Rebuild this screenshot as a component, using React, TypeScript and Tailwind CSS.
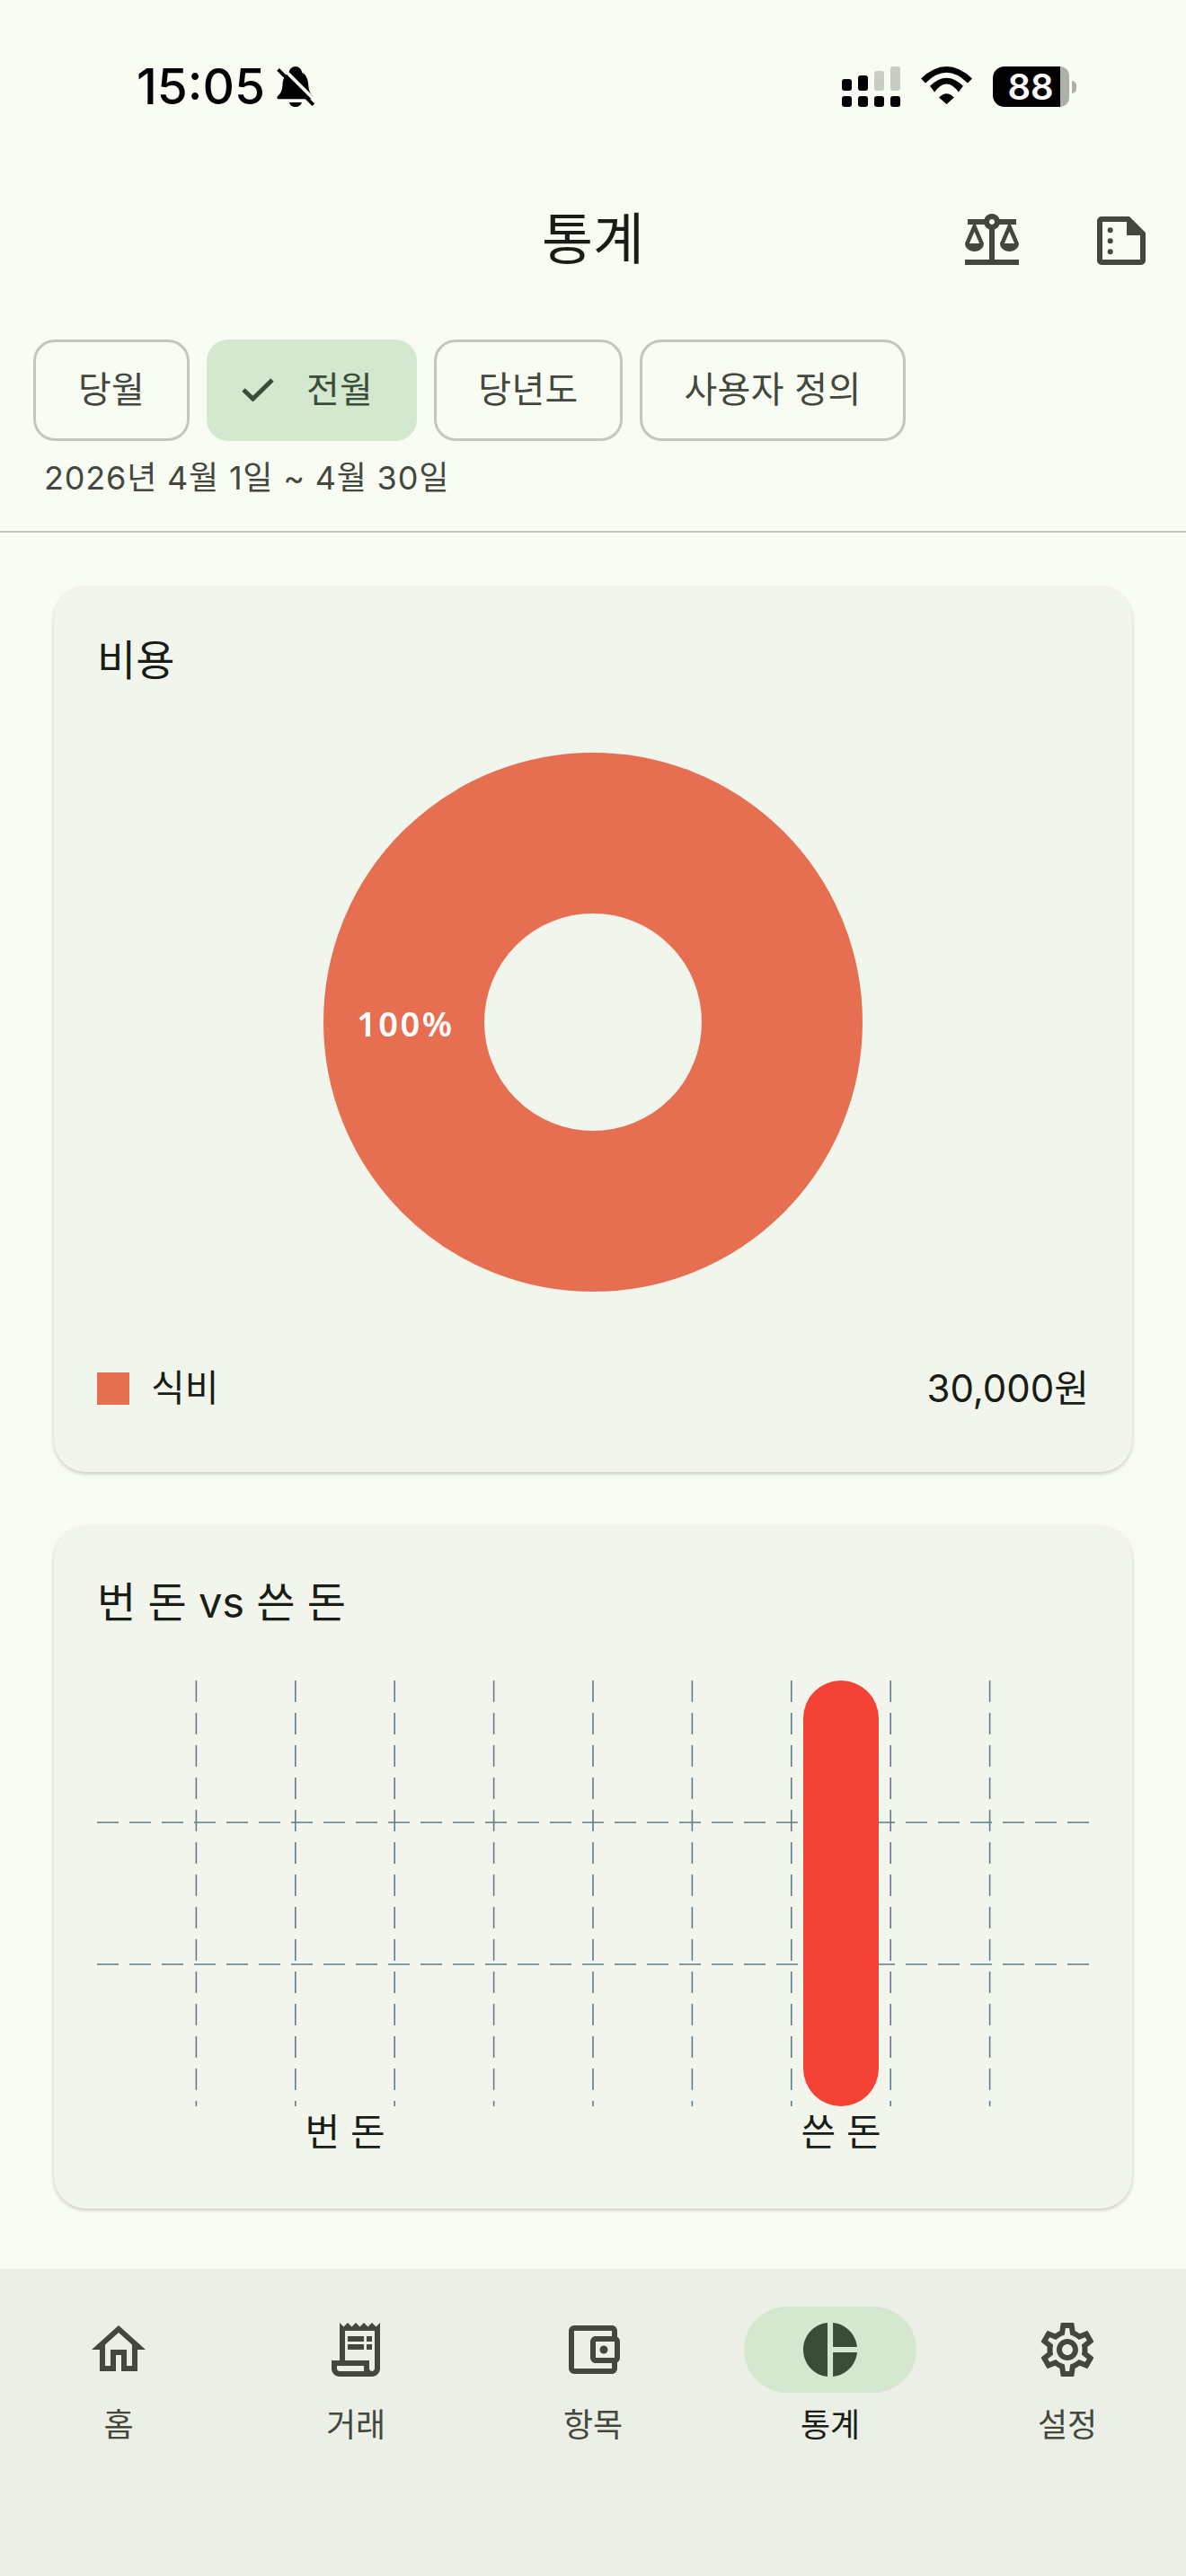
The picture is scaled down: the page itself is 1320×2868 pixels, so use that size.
import React from "react";
import {
  MdOutlineBalance,
  MdOutlineHome,
  MdOutlineReceiptLong,
  MdOutlineAccountBalanceWallet,
  MdPieChart,
  MdOutlineSettings,
} from "react-icons/md";

function Bell() {
  return (
    <svg width="42" height="45" viewBox="618 105 125 135" className="block">
      <path
        fill="#000"
        d="M680 105c-12 0-20 9-22 20-14 8-20 22-21 40-1 20-6 30-17 40-3 4-1 9 4 9h112c5 0 7-5 4-9-11-10-16-20-17-40-1-18-7-32-21-40-2-11-10-20-22-20z"
      />
      <path fill="#000" d="M659 225h42c-2 9-11 15-21 15s-19-6-21-15z" />
      <path d="M631 104L752 225" stroke="#f9fcf3" strokeWidth="11" />
      <path d="M622 115L740 233" stroke="#000" strokeWidth="11" />
    </svg>
  );
}

function Signal() {
  const bottom = [0, 18, 36, 54];
  const top = [
    { x: 0, y: 14, h: 13, c: "#000" },
    { x: 18, y: 10, h: 17, c: "#000" },
    { x: 36, y: 5, h: 22, c: "#c8ccc4" },
    { x: 54, y: 0, h: 27, c: "#c8ccc4" },
  ];
  return (
    <svg width="65" height="45" viewBox="0 0 65 45" className="block">
      {top.map((b) => (
        <rect key={b.x} x={b.x} y={b.y} width="11" height={b.h} rx="3" fill={b.c} />
      ))}
      {bottom.map((x) => (
        <rect key={x} x={x} y="33" width="11" height="12" rx="3" fill="#000" />
      ))}
    </svg>
  );
}

function Wifi() {
  return (
    <svg width="57" height="42" viewBox="435 105 170 125" className="block">
      <path fill="#000" d="M435 145Q520 65 605 145L590 160Q520 90 450 160Z" />
      <path fill="#000" d="M465 170Q520 116 575 170L560 190Q520 136 480 190Z" />
      <path fill="#000" d="M495 208Q520 182 545 208L520 230Z" />
    </svg>
  );
}

function Battery() {
  return (
    <div className="flex items-center">
      <div className="flex h-[45px] w-[75px] items-center justify-center rounded-l-[13px] bg-black pl-[9px] text-[40px] leading-[45px] font-semibold text-white">
        88
      </div>
      <div className="h-[45px] w-[10px] rounded-r-[10px] bg-[#adb0a9]" />
      <div className="ml-[3px] h-[14px] w-[5px] rounded-r-full bg-[#adb0a9]" />
    </div>
  );
}

function FileNotes() {
  return (
    <svg width="54" height="54" viewBox="0 0 54 54" className="block">
      <path
        fill="#43483f"
        fillRule="evenodd"
        d="M5 0H36L54 18V49a5 5 0 0 1-5 5H5a5 5 0 0 1-5-5V5a5 5 0 0 1 5-5zM6 6V48H48V21H33V6z"
      />
      <circle cx="14.7" cy="15.3" r="3" fill="#43483f" />
      <circle cx="14.7" cy="27.3" r="3" fill="#43483f" />
      <circle cx="14.7" cy="39.3" r="3" fill="#43483f" />
    </svg>
  );
}

function Check() {
  return (
    <svg width="36" height="26" viewBox="0 0 36 26" className="block">
      <path d="M2 13L12.5 23L34 2" fill="none" stroke="#3b4d38" strokeWidth="5" />
    </svg>
  );
}

function Chip({ label, w }: { label: string; w: string }) {
  return (
    <div
      className={`flex h-[113px] ${w} items-center justify-center rounded-[24px] border-[3px] border-[#c3c8bc] pb-[2px] text-[40px] tracking-[0.3px] text-[#43483f]`}
    >
      {label}
    </div>
  );
}

function Card({
  title,
  className,
  titleClass,
  children,
}: {
  title: string;
  className: string;
  titleClass: string;
  children: React.ReactNode;
}) {
  return (
    <section
      className={`${className} rounded-[36px] bg-[#f2f5ec] px-[48px] shadow-[0_2px_4px_rgba(0,0,0,0.2)]`}
    >
      <h2 className={`${titleClass} text-[47px] leading-[64px] text-[#191d17]`}>{title}</h2>
      {children}
    </section>
  );
}

function BarChart() {
  const xs = [1, 2, 3, 4, 5, 6, 7, 8, 9].map((k) => 110.4 * k);
  return (
    <svg width="1104" height="474" viewBox="0 0 1104 474" className="block">
      {xs.map((x) => (
        <line key={x} x1={x} x2={x} y1="0" y2="474" stroke="#607d8b" strokeWidth="1.6" strokeDasharray="24 12" />
      ))}
      {[158, 316].map((y) => (
        <line key={y} x1="0" x2="1104" y1={y} y2={y} stroke="#607d8b" strokeWidth="1.4" strokeDasharray="24 12" />
      ))}
      <rect x="786" y="0" width="84" height="474" rx="42" fill="#f44336" />
    </svg>
  );
}

function NavItem({ icon, label, active }: { icon: React.ReactNode; label: string; active?: boolean }) {
  return (
    <div className="flex w-[264px] flex-col items-center pt-[42px]">
      <div
        className={`flex h-[96px] w-[192px] items-center justify-center rounded-full ${active ? "bg-[#d4e8d0] text-[#3b4d38]" : "text-[#43483f]"}`}
      >
        {icon}
      </div>
      <div className={`mt-[12px] text-[36px] leading-[48px] ${active ? "text-[#191d17]" : "text-[#43483f]"}`}>{label}</div>
    </div>
  );
}

export default function App() {
  return (
    <div className="flex h-[2868px] w-[1320px] flex-col overflow-hidden bg-[#f9fcf3] font-['Inter','Noto_Sans_CJK_KR',sans-serif]">
      <div className="flex h-[168px] items-start justify-between pt-[74px] pr-[122px] pl-[152px]">
        <div className="flex items-center gap-[13px]">
          <span className="text-[55px] leading-[45px] font-medium text-black">15:05</span>
          <Bell />
        </div>
        <div className="flex items-start gap-[23px]">
          <Signal />
          <Wifi />
          <Battery />
        </div>
      </div>

      <header className="grid h-[200px] grid-cols-3 items-center">
        <div />
        <h1 className="pb-[3px] text-center text-[62px] leading-none text-[#191d17]">통계</h1>
        <div className="flex justify-end">
          <div className="flex h-[144px] w-[144px] items-center justify-center text-[#43483f]">
            <MdOutlineBalance size={72} />
          </div>
          <div className="flex h-[144px] w-[144px] items-center justify-center">
            <FileNotes />
          </div>
        </div>
      </header>

      <div className="mt-[10px] flex gap-[19px] pl-[37px]">
        <Chip label="당월" w="w-[174px]" />
        <div className="flex h-[113px] w-[234px] items-center rounded-[24px] bg-[#d4e8d0] pb-[2px] pl-[39px] text-[40px] tracking-[0.3px] text-[#3b4d38]">
          <Check />
          <span className="ml-[36px]">전월</span>
        </div>
        <Chip label="당년도" w="w-[210px]" />
        <Chip label="사용자 정의" w="w-[296px]" />
      </div>
      <div className="h-[100px] pt-[16px] pl-[49px] text-[36px] leading-[50px] tracking-[0.8px] text-[#43483f]">
        2026년 4월 1일 ~ 4월 30일
      </div>
      <div className="h-[2px] bg-[#c3c8bc]" />

      <main className="flex flex-1 flex-col gap-[60px] px-[60px] pt-[60px]">
        <Card title="비용" titleClass="pt-[50px]" className="h-[986px]">
          <div className="relative mx-auto mt-[71px] h-[600px] w-[600px]">
            <svg width="600" height="600" viewBox="0 0 600 600" className="block">
              <circle cx="300" cy="300" r="210.5" fill="none" stroke="#e76f51" strokeWidth="179" />
            </svg>
            <span className="absolute top-[278px] left-[37px] font-['Noto_Sans',sans-serif] text-[38px] leading-[46px] font-semibold tracking-[2.5px] text-white">
              100%
            </span>
          </div>
          <div className="mt-[77px] flex items-center">
            <div className="h-[36px] w-[36px] bg-[#e76f51]" />
            <span className="ml-[24px] pb-[2px] text-[41px] leading-[60px] text-[#191d17]">식비</span>
            <span className="ml-auto text-[42px] leading-[60px] text-[#191d17]">30,000원</span>
          </div>
        </Card>

        <Card title="번 돈 vs 쓴 돈" titleClass="pt-[53px]" className="h-[760px]">
          <div className="mt-[55px]">
            <BarChart />
          </div>
          <div className="flex pt-[1px] text-[42px] leading-[56px] text-[#191d17]">
            <div className="w-[552px] text-center">번 돈</div>
            <div className="w-[552px] text-center">쓴 돈</div>
          </div>
        </Card>
      </main>

      <nav className="flex h-[342px] bg-[#ecefe6]">
        <NavItem icon={<MdOutlineHome size={72} />} label="홈" />
        <NavItem icon={<MdOutlineReceiptLong size={72} />} label="거래" />
        <NavItem icon={<MdOutlineAccountBalanceWallet size={72} />} label="항목" />
        <NavItem icon={<MdPieChart size={72} />} label="통계" active />
        <NavItem icon={<MdOutlineSettings size={72} />} label="설정" />
      </nav>
    </div>
  );
}
